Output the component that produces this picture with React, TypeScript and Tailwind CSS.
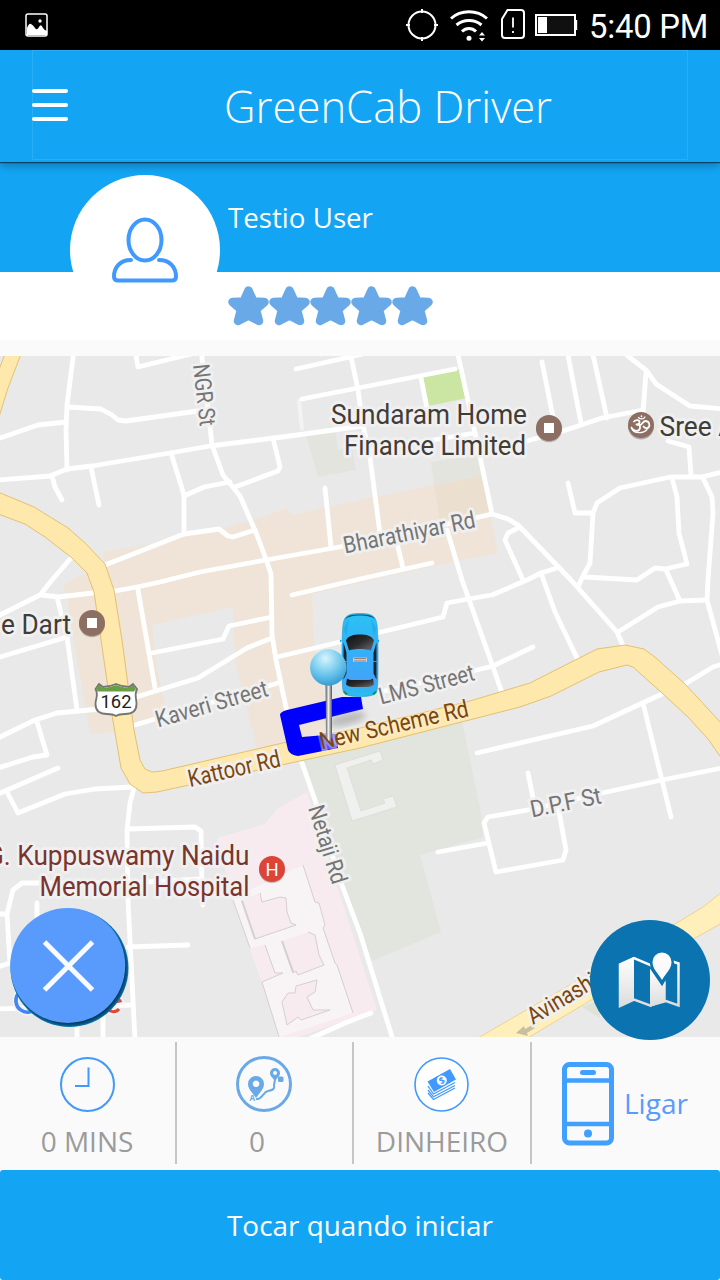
import React from "react";

const ROADS: string[] = [
  "74,350 67,405 66,430 67,470",
  "68,407 101,409 112,415 118,420 126,421 205,410",
  "0,438 38,425 66,422",
  "-2,480 50,476 67,469 92,466 170,453 210,446 290,436 362,426",
  "366,450 433,440 475,433",
  "475,452 527,441 563,431 602,418 643,410",
  "52,476 55,487 62,500",
  "91,467 99,505",
  "171,453 184,495 184,532",
  "184,496 204,487 230,482",
  "201,350 206,390 212,445 223,475 240,496 257,535 267,562 271,574 272,635 276,660 287,712",
  "273,438 280,467 278,471 235,487",
  "105,565 184,534 219,529 228,536 233,537 255,530",
  "325,488 331,547",
  "42,595 58,597 93,593 115,591 137,587 160,582 200,572 266,560 345,546 475,518 492,514 508,519 518,525 571,580 617,632 624,648",
  "135,350 138,367 195,353",
  "296,369 350,357 375,351",
  "302,399 358,388 455,369",
  "350,352 358,390 362,420 370,457 380,534",
  "457,350 475,433 492,514",
  "421,378 427,408",
  "542,362 553,417",
  "567,350 581,423",
  "592,350 607,418",
  "622,350 628,356 647,371 656,384 690,406 724,409",
  "646,373 643,412",
  "668,441 689,447 691,475",
  "722,472 702,477 670,477 620,488 597,503 593,513 590,563 582,578 578,587",
  "568,483 575,513 593,513",
  "672,478 677,497 679,533 687,564 665,569 655,568 637,580 585,577",
  "703,478 712,497 713,513 708,580 707,600 722,655",
  "666,570 680,601",
  "707,600 680,601 658,607 618,632",
  "518,528 508,533 505,540 523,580",
  "277,657 340,642 377,633 443,617 447,603 468,599 492,595 527,580 541,573 557,568",
  "541,573 555,612 577,658",
  "447,530 462,580 493,667 502,693",
  "380,692 477,670 493,666 533,647",
  "292,595 360,579 432,563",
  "403,568 398,547",
  "71,558 52,580 40,595 0,615",
  "57,597 67,637 77,710",
  "0,657 67,637",
  "-2,738 35,720 57,713 100,709",
  "37,722 47,755 33,757 -2,768",
  "-2,794 58,768",
  "7,792 18,813 65,794 95,789 132,787",
  "134,788 130,803 127,830 128,900 135,1040",
  "138,590 155,688",
  "152,653 223,639 229,626 272,617",
  "133,698 198,678 247,648 272,638",
  "135,725 278,683",
  "301,760 316,803 340,880 360,933 393,1040",
  "477,753 593,726 662,694",
  "643,703 671,817",
  "685,684 713,667 722,664",
  "722,768 662,780 602,793 533,809 488,817 484,823 496,872 563,860 566,850 558,806",
  "438,852 488,843",
  "528,773 534,803",
  "128,829 195,827 201,831 202,887 203,905",
  "-2,914 7,914",
  "202,879 128,883 22,883 13,890 7,914 10,963 -2,967",
  "37,903 37,925",
  "128,947 188,945",
  "-2,1009 133,1005",
  "77,1006 77,1040",
  "103,1006 103,1040",
  "305,1041 345,1023 371,1013",
];

type Label = { t: string; x: number; y: number; r: number; w: number; s: number; c: string };

const LABELS: Label[] = [
  { t: "NGR St", x: 193, y: 365, r: 83.5, w: 62, s: 23, c: "#757575" },
  { t: "Bharathiyar Rd", x: 345, y: 553.5, r: -11.3, w: 134, s: 23.5, c: "#757575" },
  { t: "Kaveri Street", x: 158, y: 727.5, r: -16, w: 116, s: 23.5, c: "#757575" },
  { t: "LMS Street", x: 381, y: 704.5, r: -14.5, w: 98, s: 23.5, c: "#757575" },
  { t: "D.P.F St", x: 532, y: 817.5, r: -11.6, w: 72, s: 23.5, c: "#757575" },
  { t: "Netaji Rd", x: 308, y: 808, r: 72.5, w: 81, s: 23, c: "#757575" },
  { t: "Kattoor Rd", x: 190, y: 787, r: -12.7, w: 94, s: 24, c: "#7a4510" },
  { t: "Avinashi", x: 533, y: 1025, r: -31, w: 77, s: 24, c: "#7a4510" },
  { t: "Sundaram Home", x: 331, y: 424, r: 0, w: 196, s: 28.5, c: "#423c37" },
  { t: "Finance Limited", x: 344, y: 455, r: 0, w: 182, s: 28.5, c: "#423c37" },
  { t: "Sree A", x: 659.5, y: 436, r: 0, w: 76, s: 28.5, c: "#423c37" },
  { t: "e Dart", x: 1, y: 634, r: 0, w: 70, s: 28.5, c: "#423c37" },
  { t: "G. Kuppuswamy Naidu", x: -14, y: 865, r: 0, w: 263.5, s: 28.5, c: "#79342d" },
  { t: "Memorial Hospital", x: 39.5, y: 896, r: 0, w: 210, s: 28.5, c: "#79342d" },
];

function MapText({ l }: { l: Label }) {
  return (
    <text
      transform={`translate(${l.x} ${l.y}) rotate(${l.r})`}
      fontSize={l.s}
      textLength={l.w}
      lengthAdjust="spacingAndGlyphs"
      fill={l.c}
      stroke="#f1f1f1"
      strokeOpacity="0.92"
      strokeWidth="6"
      strokeLinejoin="round"
      paintOrder="stroke"
    >
      {l.t}
    </text>
  );
}

function Poi({ x, y }: { x: number; y: number }) {
  return (
    <g>
      <circle cx={x} cy={y + 1.2} r="13" fill="#000" opacity="0.25" />
      <circle cx={x} cy={y} r="13" fill="#8d6e63" />
      <rect x={x - 5} y={y - 5} width="10" height="10" fill="#fff" />
    </g>
  );
}

function Car() {
  return (
    <g transform="translate(0 0.500)">
      <path d="M342 640l-2-1v3zM377 640l2-1v3z" fill="#12a9e8" />
      <path d="M343 625c1-9 4-12 17-12s16 3 17 12c1 9 1 22 1 34 0 14 0 24-1 31-1 4-5 6-17 6s-16-2-17-6c-1-7-1-17-1-31 0-12 0-25 1-34z" fill="url(#carBody)" stroke="#0c9ad6" strokeWidth="0.6" />
      <path d="M345 619c2-4 6-5 15-5s13 1 15 5c-3-3-8-4-15-4s-12 1-15 4z" fill="#1c4a66" />
      <path d="M344 628l5-10-3 18zM376 628l-5-10 3 18z" fill="#159fe0" opacity="0.5" />
      <path d="M346 640c2-5 8-6 14-6s12 1 14 6l-3 10c-6-2-16-2-22 0z" fill="url(#glass)" />
      <path d="M343.500 642l3 10v21l-3 6zM376.500 642l-3 10v21l3 6z" fill="#162732" />
      <path d="M343 661h4M373 661h4" stroke="#1aa7ee" strokeWidth="1.200" />
      <path d="M347 678q3 2 6 1.500h14q3 .5 6-1.500l1 6q-2 2-6 2.500h-16q-4-.5-6-2.500z" fill="url(#glass)" />
      <rect x="353" y="657" width="14" height="4.500" fill="#cfcacc" />
      <path d="M354 658h12M354 660.500h12" stroke="#8a6a68" strokeWidth="0.800" />
      <path d="M344 691l3 3M376 691l-3 3" stroke="#13965b" strokeWidth="2.200" />
    </g>
  );
}

function CityMap() {
  return (
    <svg viewBox="0 356 720 681" width="720" height="681" className="block font-[Roboto,sans-serif]">
      <defs>
        <linearGradient id="carBody" x1="0" y1="0" x2="0" y2="1">
          <stop offset="0" stopColor="#2ac2f3" />
          <stop offset="0.5" stopColor="#35aefa" />
          <stop offset="0.8" stopColor="#42a4f7" />
          <stop offset="1" stopColor="#27bdf0" />
        </linearGradient>
        <linearGradient id="glass" x1="0" y1="0" x2="1" y2="1">
          <stop offset="0" stopColor="#111" />
          <stop offset="0.5" stopColor="#2a2a2c" />
          <stop offset="1" stopColor="#6d6d70" />
        </linearGradient>
        <radialGradient id="ball" cx="0.42" cy="0.25" r="0.75">
          <stop offset="0" stopColor="#d8f3fc" />
          <stop offset="0.35" stopColor="#97daf4" />
          <stop offset="0.75" stopColor="#55b8e4" />
          <stop offset="1" stopColor="#3a9bd0" />
        </radialGradient>
        <linearGradient id="stem">
          <stop offset="0" stopColor="#555" />
          <stop offset="0.45" stopColor="#eee" />
          <stop offset="1" stopColor="#555" />
        </linearGradient>
        <filter id="soft"><feGaussianBlur stdDeviation="3" /></filter>
      </defs>
      <rect x="0" y="356" width="720" height="681" fill="#e9e9e9" />

      <path d="M103 552L150 544L184 532L225 528L263 517L287 508L292 515L360 500L482 475L498 553L433 566L312 594L314 645L325 700L330 735L257 749L235 660L233 607L152 625L157 670L165 703L163 715L112 732L90 734L67 600L63 585L83 574L104 564Z" fill="#efe4d7" />
      <path d="M434 485L482 475L491 512L440 521Z" fill="#ebdfcf" />
      <path d="M431 462L478 455L482 475L434 485Z" fill="#e3e4de" />
      <path d="M306 435L335 430L338 450L352 448L356 470L318 477Z" fill="#e3e4de" />
      <path d="M423 377L460 369L467 398L428 406Z" fill="#cbe6a3" />
      <path d="M303 760L462 722L480 808L483 837L420 855L441 932L372 961L360 930Z" fill="#e2e4de" />
      <path d="M582 1007L600 1000V1018Z" fill="#dfe3d6" />
      <path d="M307 792L277 809L265 824L217 838L233 900L262 982L278 1037H298L377 1010L340 895Z" fill="#f7ebef" />
      <path d="M232 898L250 890L303 865L315 902L319 903L325 925L323 928L335 963L337 965L353 1013L280 1037L262 982L250 948Z" fill="#f8f4f6" />
      <g fill="#f7ebef">
        <path d="M242 900L260 893L262 902L280 897L286 898L287 912L291 923L296 925L255 939Z" />
        <path d="M282 941L308 932L315 935L319 955L324 965L298 975L296 971L293 973Z" />
        <path d="M250 948L265 945L275 973L283 973L262 982Z" />
        <path d="M282 1002L288 993L295 993L296 986L317 980L315 992L307 997L313 1010H330L301 1020L298 1017L287 1025Z" />
      </g>
      <g fill="none" stroke="#d4cfd1" strokeWidth="1">
        <path d="M303 865L315 902L319 903L325 925L323 928L335 963L337 965L353 1013M233 900L250 948M262 982L279 1037" />
        <path d="M242 900L255 939L296 925L291 923L287 912L286 898L280 897L262 902L260 893" />
        <path d="M308 932L315 935L319 955L324 965L298 975L296 971L293 973L282 941" />
        <path d="M265 945L275 973L283 973L262 982" />
        <path d="M317 980L315 992L307 997L313 1010H330L301 1020L298 1017L287 1025L282 1002L288 993L295 993L296 986Z" />
        <path d="M242 901L255 939M282 941L293 972" strokeWidth="2" />
      </g>
      <path d="M335 765L380 751L383 760L373 764L371 760L347 768L361 811L385 803L383 799L393 796L397 807L352 821Z" fill="#f0f0ee" stroke="#d9dad5" strokeWidth="0.700" />
      <path d="M299 399L302 430" stroke="#f3f3f3" strokeWidth="4" />

      <g fill="none" stroke="#fff" strokeWidth="4.800" strokeLinecap="round" strokeLinejoin="round">
        {ROADS.map((p) => (
          <polyline key={p} points={p} />
        ))}
      </g>

      <path d="M-2 372L5 354H21L8 388L-2 420Z" fill="#ffe8ab" stroke="#e2c173" />
      <path d="M-2 492L34 507L68 528L85 543L105 564L114 590L122 640L134 730L140 760L145 769L152 772L162 771L287 742L360 728L470 701L530 683L597 649L625 645L644 649L656 658L685 684L722 724V759L708 739L688 717L662 693L633 667L627 665L599 672L551 696L520 707L360 748L157 792L143 793L130 784L121 768L112 715L100 633L94 592L87 573L72 558L45 537L25 524L-2 514Z" fill="#ffe8ab" stroke="#e2c173" />
      <path d="M478 1038L675 924L703 907L722 892V923L695 938L526 1039Z" fill="#ffefbb" stroke="#ecd48f" />
      <path d="M516 1033L524 1026L525 1029L534 1024L535 1028L527 1033L528 1036Z" fill="#c9bfa0" />

      {LABELS.map((l) => (
        <MapText key={l.t} l={l} />
      ))}
      <Poi x={549} y={428} />
      <Poi x={92} y={623} />
      <circle cx="641" cy="426.500" r="13" fill="#000" opacity="0.250" />
      <circle cx="641" cy="425" r="13" fill="#8d6e63" />
      <g fill="none" stroke="#fff" strokeWidth="1.800" strokeLinecap="round" strokeLinejoin="round">
        <path d="M634 421.500c2-2.500 6-1.500 5.500 1-.4 1.700-2 2-3 2 2.500 0 4 1 3.500 3.500-.8 4-6.500 4-8.500-.5" />
        <path d="M639.500 425c3 .5 3-4 6-4 3.500 0 5 4 3 6.500-1.500 1.500-4 .5-5-1" />
        <path d="M632 429c2 4.500 11 5 15 .5M638.500 417.500c1.500 2 5 2 6.500-.5" strokeWidth="1.300" />
        <path d="M641.500 416.200v.1" />
      </g>
      <circle cx="272" cy="870.200" r="13" fill="#000" opacity="0.200" />
      <circle cx="272" cy="869" r="13" fill="#db4437" />
      <text x="272" y="875.500" textAnchor="middle" fontSize="18.500" fill="#fff">H</text>

      <path d="M99 684L103 687Q109 687 116 684Q123 687 129 687L133 684L137 689C134 695 136.500 698 136.500 704C136.500 712 131 714 125 714Q119 714 116 716Q113 714 107 714C101 714 95.500 712 95.500 704C95.500 698 99 695 95.500 689Z" fill="#fff" stroke="#757575" strokeWidth="1.800" />
      <path d="M99 685L103 688Q109 688 116 685Q123 688 129 688L133 685L136 689L134 691.500H98L96 689Z" fill="#689f45" />
      <text x="100.500" y="707.500" fontSize="18.500" textLength="31" lengthAdjust="spacingAndGlyphs" fill="#222">162</text>

      <path d="M280 715Q280 712 287 710L342 697H361L363 709L299 725L302 737L337 734L338 748L298 756Q290 755 288 750Z" fill="#0000fe" />
      <path d="M321 733L338 734L338 747L322 751Z" fill="#6d62f0" opacity="0.800" />
      <text transform="translate(321.500 749.500) rotate(-12.700)" fontSize="24" textLength="152" lengthAdjust="spacingAndGlyphs" fill="#7a4510" stroke="#f7f1e2" strokeOpacity="0.350" strokeWidth="5" paintOrder="stroke">New Scheme Rd</text>
      <ellipse cx="347" cy="719" rx="19" ry="6" transform="rotate(-14 347 719)" fill="#666" opacity="0.350" filter="url(#soft)" />
      <Car />
      <path d="M325.500 680H332V737L329 741L326 737Z" fill="url(#stem)" />
      <circle cx="328.300" cy="667.500" r="18.200" fill="url(#ball)" />

      <path d="M35 992A11.500 11.500 0 1 0 37 1007" fill="none" stroke="#f2f2f2" strokeWidth="7" />
      <path d="M35 992A11.500 11.500 0 1 0 37 1007" fill="none" stroke="#4285f4" strokeWidth="3.500" />
      <path d="M106 1004L120 1001A7.500 7.500 0 1 0 119 1009" fill="none" stroke="#f2f2f2" strokeWidth="7" />
      <path d="M106 1004L120 1001A7.500 7.500 0 1 0 119 1009" fill="none" stroke="#ea4335" strokeWidth="3" />
    </svg>
  );
}

function StatusBar() {
  return (
    <div className="flex h-[50px] items-center bg-black pr-[13px] pl-[25px] text-white">
      <svg width="23" height="24" viewBox="0 0 23 24">
        <rect x="1" y="1" width="21" height="22" rx="2" fill="none" stroke="#fff" strokeWidth="1.500" />
        <path d="M2 15Q4 10 6 11T10 15Q12 18 14 14T18 15Q20 18 22 18V22H2z" fill="#fff" />
        <circle cx="15" cy="8" r="1.700" fill="#fff" />
      </svg>
      <div className="flex-1" />
      <svg width="174" height="40" viewBox="405 5 174 40" fill="none" stroke="#fff" strokeWidth="2">
        <circle cx="422" cy="25" r="13.500" />
        <path d="M422 9v4M422 37v4M406 25h4M434 25h4" />
        <g strokeWidth="3">
          <path d="M451 18.500c10-9 26-9 36 0" />
          <path d="M456.500 25c7-6 18-6 25 0" />
          <path d="M462 31.500c4-4 10-4 14 0" />
        </g>
        <circle cx="469" cy="38.300" r="2.500" fill="#fff" stroke="none" />
        <path d="M482 32l3 3.500h-6zM482 41.500l3-3.500h-6z" fill="#fff" stroke="none" />
        <path d="M507.500 10H521q3 0 3 3V35q0 3-3 3H505q-3 0-3-3V19z" />
        <path d="M513 17.500v10M513 31v2" strokeWidth="1.800" />
        <rect x="536" y="15" width="39" height="20" fill="#101010" />
        <path d="M576.200 20v10" />
        <rect x="538" y="17" width="9" height="16" fill="#fff" stroke="none" />
      </svg>
      <div className="mt-[4px] ml-[10px] w-[118px] text-[32.800px] leading-none tracking-[-0.200px] whitespace-nowrap font-[Roboto,sans-serif]">5:40 PM</div>
    </div>
  );
}

function Header() {
  return (
    <div className="relative z-10 h-[112px] bg-[#13a4f4] px-8 shadow-[0_1px_1px_rgba(0,0,0,0.500),0_4px_8px_rgba(0,0,0,0.250)]">
      <div className="flex h-[110px] items-center border border-[#2badf5]">
        <div className="-ml-px flex w-9 flex-col gap-[10px]">
          <div className="h-1 rounded-sm bg-white" />
          <div className="h-1 rounded-sm bg-white" />
          <div className="h-1 rounded-sm bg-white" />
        </div>
        <h1 className="ml-[156px] pt-1 text-[43.600px] leading-none font-light whitespace-nowrap text-white">GreenCab Driver</h1>
      </div>
    </div>
  );
}

function Star() {
  return (
    <svg width="41" height="40" viewBox="0 0 41 40" className="block">
      <path d="M20.500 4.500L25.500 15.500L36.500 16L28 23.500L31 35L20.500 29.500L10 35L13 23.500L4.500 16L15.500 15.500Z" fill="#6aa9e8" stroke="#6aa9e8" strokeWidth="8.500" strokeLinejoin="round" />
    </svg>
  );
}

function Profile() {
  return (
    <div className="flex h-[178px] bg-[linear-gradient(#13a4f4_110px,#fff_110px)] pl-[70px]">
      <div className="mt-[13px] flex size-[150px] items-center justify-center rounded-full bg-white">
        <svg width="68" height="68" viewBox="0 0 68 68" fill="none" stroke="#4099ff" strokeWidth="4" strokeLinecap="round">
          <ellipse cx="34" cy="24" rx="16.500" ry="20.500" />
          <path d="M20 44C9 44 3 51.500 3 60.500q0 4 4 4H61q4 0 4-4C65 51.500 59 44 48 44" />
        </svg>
      </div>
      <div className="ml-2 flex flex-col">
        <div className="flex h-[110px] items-center pt-0.5 text-[27.700px] leading-none text-white">Testio User</div>
        <div className="mt-[14px] flex">
          <Star /><Star /><Star /><Star /><Star />
        </div>
      </div>
    </div>
  );
}

function ClockIcon() {
  return (
    <svg width="56" height="56" viewBox="0 0 56 56" fill="none" stroke="#4099ff" strokeWidth="2">
      <circle cx="28.500" cy="28.500" r="26.500" />
      <path d="M29.500 11.500V30H16" />
    </svg>
  );
}

function RouteIcon() {
  return (
    <svg width="56" height="56" viewBox="0 0 56 56" fill="none" stroke="#6aa9e8">
      <circle cx="28" cy="28" r="26.500" strokeWidth="3" />
      <path d="M20 42c-4-6-8-9-8-14a8 8 0 0 1 16 0c0 5-4 8-8 14zM20 24.500a3.300 3.300 0 1 0 .1 0z" fill="#6aa9e8" fillRule="evenodd" stroke="none" />
      <path d="M39 25c-3-4-5-5-5-8a5 5 0 0 1 10 0c0 3-2 4-5 8zM39 15a2 2 0 1 0 .1 0z" fill="#6aa9e8" fillRule="evenodd" stroke="none" />
      <path d="M20 43c6 1 7-7 12-8s7-2 6-6l1-5" strokeWidth="2" />
      <text x="13.500" y="45" fontSize="8" fontWeight="700" fill="#6aa9e8" stroke="none">A</text>
      <rect x="42" y="20.500" width="5.500" height="5.500" rx="1.500" fill="#6aa9e8" stroke="none" />
    </svg>
  );
}

function CashIcon() {
  return (
    <svg width="56" height="56" viewBox="0 0 56 56" fill="none" stroke="#4099ff">
      <circle cx="28.500" cy="28.500" r="26.500" fill="#fff" strokeWidth="1.600" />
      <path d="M14.500 25.500L37 13L43 23.500L21 36Z" fill="#4099ff" stroke="none" />
      <path d="M15 30L20.500 38L42 26.500M15 34L20.500 40.800L42 29.500M15 37L20.500 43.500L42 32" strokeWidth="1.300" />
      <circle cx="28.800" cy="24.500" r="5" fill="#fff" stroke="none" />
      <text x="28.800" y="28" fontSize="9.500" fontWeight="700" textAnchor="middle" fill="#4099ff" stroke="none" transform="rotate(-25 28.800 24.500)">$</text>
    </svg>
  );
}

function PhoneIcon() {
  return (
    <svg width="52" height="84" viewBox="0 0 52 84" fill="none" stroke="#409fff">
      <rect x="2.500" y="2.500" width="47" height="78.500" rx="5" strokeWidth="5" />
      <path d="M2 18.500H50M2 62H50" strokeWidth="4.500" />
      <path d="M20.500 10.500H31.500" strokeWidth="5" strokeLinecap="round" />
      <circle cx="26" cy="71.500" r="4" fill="#409fff" stroke="none" />
    </svg>
  );
}

function Stat({ icon, label }: { icon: React.ReactNode; label: string }) {
  return (
    <div className="flex w-[174px] flex-col items-center pt-[19px]">
      {icon}
      <div className="mt-[15px] text-[28px] leading-none whitespace-nowrap text-[#9b9b9b]">{label}</div>
    </div>
  );
}

function Divider() {
  return <div className="mt-[5px] h-[122px] w-0.5 bg-[#c6c6c6]" />;
}

export default function App() {
  return (
    <div className="flex h-[1280px] w-[720px] flex-col overflow-hidden bg-[#fafafa] font-['Open_Sans',sans-serif]">
      <StatusBar />
      <Header />
      <Profile />
      <div className="relative mt-4 h-[681px]">
        <CityMap />
        <button className="absolute top-[552px] left-[9px] block">
          <svg width="120" height="120" viewBox="9 907.500 120 120">
            <defs>
              <radialGradient id="cancelEdge">
                <stop offset="0.900" stopColor="#03263f" />
                <stop offset="0.970" stopColor="#075583" />
                <stop offset="1" stopColor="#0d7db5" />
              </radialGradient>
            </defs>
            <circle cx="69.500" cy="967.500" r="59" fill="url(#cancelEdge)" />
            <circle cx="67.700" cy="965" r="57.500" fill="#589bfc" />
            <path d="M44.500 941.500L92.500 989.500M92.500 941.500L44.500 989.500" stroke="#f8fbff" strokeWidth="5" />
          </svg>
        </button>
        <button className="absolute top-[564px] left-[590px] flex size-[120px] items-center justify-center rounded-full bg-[#0a73b0]">
          <svg width="120" height="120" viewBox="590 920 120 120">
            <defs>
              <linearGradient id="fold" x1="0" y1="0" x2="0" y2="1">
                <stop offset="0" stopColor="#fff" />
                <stop offset="1" stopColor="#dcdcdc" />
              </linearGradient>
            </defs>
            <path d="M620 964.500L634 958L650 965L665 959L678.500 963.500V1005.500L666 1001L650 1005.500L634 999.500L620 1006Z" fill="#0a73b0" stroke="url(#fold)" strokeWidth="2.500" />
            <path d="M619 964.500L634 957V999.500L619 1007Z" fill="url(#fold)" />
            <path d="M650 965L665.500 961V1001L650 1007Z" fill="url(#fold)" />
            <path d="M662 988C657 978 650 971 650 963.500A12 12 0 0 1 674 963.500C674 971 667 978 662 988Z" fill="#0a73b0" />
            <path d="M662 980C658 973 652.500 969 652.500 962A9.500 9.500 0 0 1 671.500 962C671.500 969 666 973 662 980Z" fill="#fbfbfb" />
            <path d="M650 968L662 985L665.500 980V1001L650 1007Z" fill="url(#fold)" />
            <path d="M650.500 967L662 984L666 977" fill="none" stroke="#0a73b0" strokeWidth="2.500" />
          </svg>
        </button>
      </div>
      <div className="flex h-[133px]">
        <div className="flex w-[175px]"><Stat icon={<ClockIcon />} label="0 MINS" /></div>
        <Divider />
        <div className="flex w-[175px] -translate-x-[7px]"><Stat icon={<div className="translate-x-[7px]"><RouteIcon /></div>} label="0" /></div>
        <Divider />
        <div className="flex w-[176px] pl-px"><Stat icon={<div className="-translate-x-px"><CashIcon /></div>} label="DINHEIRO" /></div>
        <Divider />
        <div className="flex flex-1 items-center gap-[10px] pl-[30px] text-[28px] text-[#589bfc]">
          <PhoneIcon />
          <span className="-mt-0.5">Ligar</span>
        </div>
      </div>
      <button className="h-[110px] rounded-[3px] bg-[#13a4f4] pt-0.5 text-[27.900px] text-white">Tocar quando iniciar</button>
    </div>
  );
}
